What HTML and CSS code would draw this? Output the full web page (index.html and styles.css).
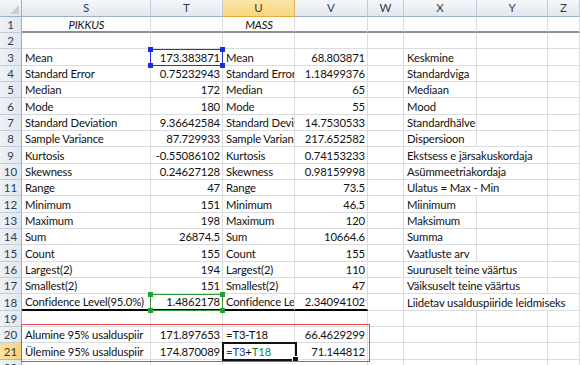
FILE: index.html
```html
<!DOCTYPE html>
<html>
<head>
<meta charset="utf-8">
<link rel="stylesheet" href="styles.css">
</head>
<body>
<div class="sheet">
  <div class="row head">
    <div class="corner"><span class="tri"></span></div>
    <div class="ch">S</div><div class="ch">T</div><div class="ch sel">U</div><div class="ch">V</div><div class="ch">W</div><div class="ch">X</div><div class="ch">Y</div><div class="ch">Z</div>
  </div>
  <div class="row r1">
    <div class="rh">1</div><div class="c it ctr">PIKKUS</div><div class="c"></div><div class="c it ctr">MASS</div><div class="c"></div><div class="c"></div><div class="c"></div><div class="c"></div><div class="c"></div>
  </div>
  <div class="row">
    <div class="rh">2</div><div class="c"></div><div class="c"></div><div class="c"></div><div class="c"></div><div class="c"></div><div class="c"></div><div class="c"></div><div class="c"></div>
  </div>
  <div class="row tall">
    <div class="rh">3</div><div class="c">Mean</div><div class="c n">173.383871</div><div class="c">Mean</div><div class="c n">68.803871</div><div class="c"></div><div class="c ov">Keskmine</div><div class="c"></div><div class="c"></div>
  </div>
  <div class="row">
    <div class="rh">4</div><div class="c">Standard Error</div><div class="c n">0.75232943</div><div class="c">Standard Error</div><div class="c n">1.18499376</div><div class="c"></div><div class="c ov">Standardviga</div><div class="c"></div><div class="c"></div>
  </div>
  <div class="row">
    <div class="rh">5</div><div class="c">Median</div><div class="c n">172</div><div class="c">Median</div><div class="c n">65</div><div class="c"></div><div class="c ov">Mediaan</div><div class="c"></div><div class="c"></div>
  </div>
  <div class="row tall">
    <div class="rh">6</div><div class="c">Mode</div><div class="c n">180</div><div class="c">Mode</div><div class="c n">55</div><div class="c"></div><div class="c ov">Mood</div><div class="c"></div><div class="c"></div>
  </div>
  <div class="row">
    <div class="rh">7</div><div class="c">Standard Deviation</div><div class="c n">9.36642584</div><div class="c">Standard Deviation</div><div class="c n">14.7530533</div><div class="c"></div><div class="c ov">Standardhälve</div><div class="c"></div><div class="c"></div>
  </div>
  <div class="row">
    <div class="rh">8</div><div class="c">Sample Variance</div><div class="c n">87.729933</div><div class="c">Sample Variance</div><div class="c n">217.652582</div><div class="c"></div><div class="c ov">Dispersioon</div><div class="c"></div><div class="c"></div>
  </div>
  <div class="row tall">
    <div class="rh">9</div><div class="c">Kurtosis</div><div class="c n">-0.55086102</div><div class="c">Kurtosis</div><div class="c n">0.74153233</div><div class="c"></div><div class="c span2">Ekstsess e järsakuskordaja</div><div class="c"></div>
  </div>
  <div class="row">
    <div class="rh">10</div><div class="c">Skewness</div><div class="c n">0.24627128</div><div class="c">Skewness</div><div class="c n">0.98159998</div><div class="c"></div><div class="c span2">Asümmeetriakordaja</div><div class="c"></div>
  </div>
  <div class="row">
    <div class="rh">11</div><div class="c">Range</div><div class="c n">47</div><div class="c">Range</div><div class="c n">73.5</div><div class="c"></div><div class="c span2">Ulatus = Max - Min</div><div class="c"></div>
  </div>
  <div class="row tall">
    <div class="rh">12</div><div class="c">Minimum</div><div class="c n">151</div><div class="c">Minimum</div><div class="c n">46.5</div><div class="c"></div><div class="c ov">Miinimum</div><div class="c"></div><div class="c"></div>
  </div>
  <div class="row">
    <div class="rh">13</div><div class="c">Maximum</div><div class="c n">198</div><div class="c">Maximum</div><div class="c n">120</div><div class="c"></div><div class="c ov">Maksimum</div><div class="c"></div><div class="c"></div>
  </div>
  <div class="row">
    <div class="rh">14</div><div class="c">Sum</div><div class="c n">26874.5</div><div class="c">Sum</div><div class="c n">10664.6</div><div class="c"></div><div class="c ov">Summa</div><div class="c"></div><div class="c"></div>
  </div>
  <div class="row tall">
    <div class="rh">15</div><div class="c">Count</div><div class="c n">155</div><div class="c">Count</div><div class="c n">155</div><div class="c"></div><div class="c ov">Vaatluste arv</div><div class="c"></div><div class="c"></div>
  </div>
  <div class="row">
    <div class="rh">16</div><div class="c">Largest(2)</div><div class="c n">194</div><div class="c">Largest(2)</div><div class="c n">110</div><div class="c"></div><div class="c span2">Suuruselt teine väärtus</div><div class="c"></div>
  </div>
  <div class="row">
    <div class="rh">17</div><div class="c">Smallest(2)</div><div class="c n">151</div><div class="c">Smallest(2)</div><div class="c n">47</div><div class="c"></div><div class="c span2">Väiksuselt teine väärtus</div><div class="c"></div>
  </div>
  <div class="row tall">
    <div class="rh">18</div><div class="c thick">Confidence Level(95.0%)</div><div class="c n thick">1.4862178</div><div class="c thick">Confidence Level(95.0%)</div><div class="c n thick">2.34094102</div><div class="c"></div><div class="c span3">Liidetav usalduspiiride leidmiseks</div>
  </div>
  <div class="row">
    <div class="rh">19</div><div class="c"></div><div class="c"></div><div class="c"></div><div class="c"></div><div class="c"></div><div class="c"></div><div class="c"></div><div class="c"></div>
  </div>
  <div class="row">
    <div class="rh">20</div><div class="c">Alumine 95% usalduspiir</div><div class="c n">171.897653</div><div class="c">=T3-T18</div><div class="c n">66.4629299</div><div class="c"></div><div class="c"></div><div class="c"></div><div class="c"></div>
  </div>
  <div class="row tall">
    <div class="rh on">21</div><div class="c">Ülemine 95% usalduspiir</div><div class="c n">174.870089</div><div class="c"><span class="ref1">=T3</span>+<span class="ref2">T18</span></div><div class="c n">71.144812</div><div class="c"></div><div class="c"></div><div class="c"></div><div class="c"></div>
  </div>
  <div class="row">
    <div class="rh">22</div><div class="c"></div><div class="c"></div><div class="c"></div><div class="c"></div><div class="c"></div><div class="c"></div><div class="c"></div><div class="c"></div>
  </div>

  <div class="box blue b-t3"><i class="h tl"></i><i class="h tr"></i><i class="h bl"></i><i class="h br"></i></div>
  <div class="box green b-t18"><i class="h tl"></i><i class="h tr"></i><i class="h bl"></i><i class="h br"></i></div>
  <div class="active"><i class="fill"></i></div>
  <div class="redrect"></div>
</div>
</body>
</html>
```

FILE: styles.css
```css
html, body {
  margin: 0;
  padding: 0;
  background: #fff;
  overflow: hidden;
}
.sheet {
  position: relative;
  width: 580px;
  height: 365px;
  overflow: hidden;
  font-family: Lato, "Liberation Sans", sans-serif;
  font-size: 11.3px;
  letter-spacing: -0.15px;
  color: #111;
}
.row {
  display: grid;
  grid-template-columns: 22px 129px 72px 72px 73px 36px 73px 71px 32px;
  height: 16px;
}
.row.tall { height: 17px; }
.row.head { height: 17px; }
.row > div {
  box-sizing: border-box;
  min-width: 0;
}
.corner {
  position: relative;
  background: linear-gradient(#f3f6fa, #e3e8ee);
  border-right: 1px solid #9eb0c5;
  border-bottom: 1px solid #9eb0c5;
}
.tri {
  position: absolute;
  right: 2px;
  bottom: 2px;
  width: 0;
  height: 0;
  border-left: 9px solid transparent;
  border-bottom: 9px solid #c8ced6;
}
.ch {
  background: linear-gradient(#f5f7fa, #e2e7ee);
  border-right: 1px solid #c3ccd8;
  border-bottom: 1px solid #9eb0c5;
  text-align: center;
  line-height: 16px;
  color: #2f3e52;
  font-size: 11.5px;
  letter-spacing: 0;
}
.ch.sel {
  background: linear-gradient(#fbe6a8, #f8d57f);
  border-bottom: 1px solid #e8a93a;
  border-right: 1px solid #e2b25c;
  color: #4a3a1a;
}
.rh {
  background: linear-gradient(90deg, #eef2f6, #e1e7ee);
  border-right: 1px solid #9eb0c5;
  border-bottom: 1px solid #c3ccd8;
  text-align: center;
  color: #2f3e52;
  font-size: 11.5px;
  letter-spacing: 0;
  display: flex;
  align-items: center;
  justify-content: center;
}
.rh.on {
  background: linear-gradient(90deg, #fbe3a0, #f7d27a);
  border-bottom: 1px solid #e2b25c;
  border-right: 1px solid #e8a93a;
  color: #4a3a1a;
}
.c {
  border-right: 1px solid #dadcdd;
  border-bottom: 1px solid #dadcdd;
  padding: 0 2px 0 3px;
  white-space: nowrap;
  overflow: hidden;
  display: flex;
  align-items: center;
}
.c.ov { overflow: visible; }
.c.n { justify-content: flex-end; }
.c.ctr { justify-content: center; }
.c.it { font-style: italic; }
.span2 { grid-column: span 2; }
.span3 { grid-column: span 3; }
.r1 > div { border-bottom: 2px solid #8e8e8e; }
.r1 > .rh { border-bottom: 1px solid #c3ccd8; }
.c.thick { border-bottom: 2px solid #000; }
.ref1 { color: #1c2bd6; }
.ref2 { color: #1d8a2a; }

.box {
  position: absolute;
  box-sizing: border-box;
  width: 73px;
  height: 17px;
}
.b-t3 { left: 150px; top: 49px; border: 1px solid #2233d8; }
.b-t18 { left: 150px; top: 294px; border: 1px solid #2f9a3a; }
.h {
  position: absolute;
  width: 5px;
  height: 5px;
}
.blue .h { background: #1a2fd0; }
.green .h { background: #2c9a38; }
.h.tl { left: -3px; top: -3px; }
.h.tr { right: -3px; top: -3px; }
.h.bl { left: -3px; bottom: -3px; }
.h.br { right: -3px; bottom: -3px; }
.active {
  position: absolute;
  box-sizing: border-box;
  left: 222px;
  top: 342px;
  width: 75px;
  height: 19px;
  border: 2px solid #111;
}
.fill {
  position: absolute;
  right: -4px;
  bottom: -4px;
  width: 5px;
  height: 5px;
  background: #111;
  border: 1px solid #fff;
}
.redrect {
  position: absolute;
  box-sizing: border-box;
  left: 21px;
  top: 324px;
  width: 349px;
  height: 38px;
  border: 1.5px solid #e4484b;
}
```
